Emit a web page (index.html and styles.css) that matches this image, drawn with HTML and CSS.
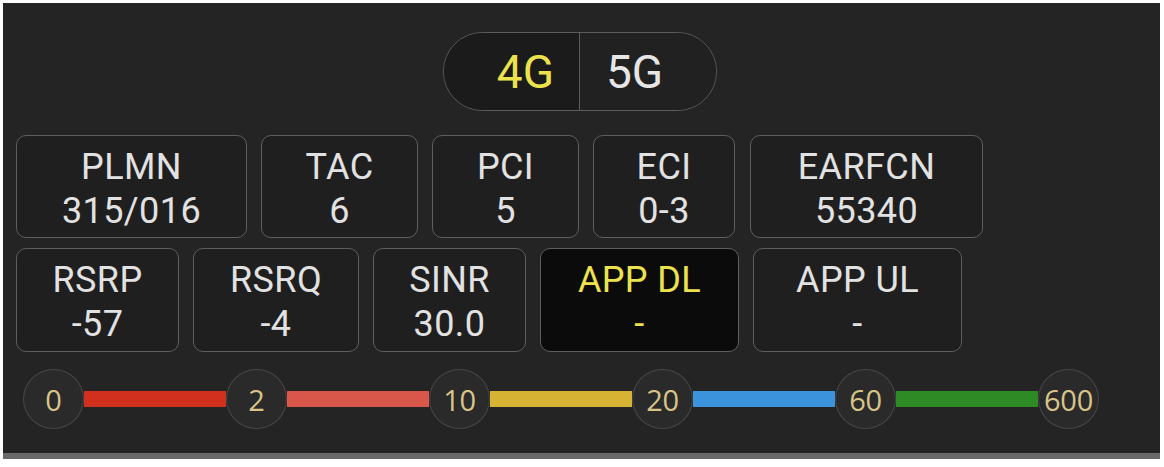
FILE: index.html
```html
<!DOCTYPE html>
<html>
<head>
<meta charset="utf-8">
<link rel="stylesheet" href="styles.css">
</head>
<body>
<div class="panel">
  <div class="toggle">
    <div class="seg seg-left active">4G</div>
    <div class="seg seg-right">5G</div>
  </div>
  <div class="row row-1">
    <div class="card w-plmn"><span>PLMN</span><span>315/016</span></div>
    <div class="card w-tac"><span>TAC</span><span>6</span></div>
    <div class="card w-pci"><span>PCI</span><span>5</span></div>
    <div class="card w-eci"><span>ECI</span><span>0-3</span></div>
    <div class="card w-earfcn"><span>EARFCN</span><span>55340</span></div>
  </div>
  <div class="row row-2">
    <div class="card tall w-rsrp"><span>RSRP</span><span>-57</span></div>
    <div class="card tall w-rsrq"><span>RSRQ</span><span>-4</span></div>
    <div class="card tall w-sinr"><span>SINR</span><span>30.0</span></div>
    <div class="card tall w-appdl selected"><span>APP DL</span><span>-</span></div>
    <div class="card tall w-appul"><span>APP UL</span><span>-</span></div>
  </div>
  <div class="scale">
    <div class="dot">0</div>
    <div class="bar bar-red"></div>
    <div class="dot">2</div>
    <div class="bar bar-coral"></div>
    <div class="dot">10</div>
    <div class="bar bar-yellow"></div>
    <div class="dot">20</div>
    <div class="bar bar-blue"></div>
    <div class="dot">60</div>
    <div class="bar bar-green"></div>
    <div class="dot">600</div>
  </div>
</div>
<div class="strip"></div>
</body>
</html>
```
FILE: styles.css
```css
html, body {
  margin: 0;
  padding: 0;
  background: #ffffff;
}

.panel {
  margin: 3px 4px 0 3px;
  height: 450px;
  box-sizing: border-box;
  background: #242424;
  padding: 29px 0 0 13px;
  font-family: Roboto, "Noto Sans", sans-serif;
  color: #e2e2e2;
}

.strip {
  margin: 0 4px 0 3px;
  height: 6px;
  background: #6a6a6a;
}

.toggle {
  width: 274px;
  height: 79px;
  box-sizing: border-box;
  margin: 0 0 0 427px;
  display: flex;
  border: 1.5px solid #5c5c5c;
  border-radius: 40px;
  overflow: hidden;
}

.seg {
  flex: 1;
  display: flex;
  align-items: center;
  font-size: 46px;
  line-height: 1;
  color: #e6e6e6;
}

.seg-left {
  justify-content: flex-end;
  padding-right: 25px;
  background: #1b1b1b;
  border-right: 1.5px solid #5c5c5c;
}

.seg-right {
  justify-content: flex-start;
  padding-left: 26px;
  background: #212121;
}

.seg.active {
  color: #ebe24e;
}

.row {
  display: flex;
  gap: 14px;
}

.row-1 {
  margin-top: 24px;
}

.row-2 {
  margin-top: 10px;
}

.card {
  height: 103px;
  box-sizing: border-box;
  border: 1.5px solid #5e5e5e;
  border-radius: 10px;
  background: #1f1f1f;
  padding-top: 9px;
  display: flex;
  flex-direction: column;
  align-items: center;
  font-size: 36px;
  line-height: 44px;
  letter-spacing: 0.4px;
  white-space: nowrap;
}

.card.tall {
  height: 104px;
}

.card.selected {
  background: #0b0b0b;
  color: #ebe24e;
}

.w-plmn { width: 231px; }
.w-tac { width: 157px; }
.w-pci { width: 147px; }
.w-eci { width: 142px; }
.w-earfcn { width: 233px; margin-left: 1px; }

.w-rsrp { width: 163px; }
.w-rsrq { width: 166px; }
.w-sinr { width: 153px; }
.w-appdl { width: 199px; }
.w-appul { width: 209px; }

.scale {
  display: flex;
  align-items: center;
  margin: 17px 0 0 7px;
}

.dot {
  width: 61px;
  height: 60px;
  box-sizing: border-box;
  flex: none;
  border-radius: 50%;
  border: 1.5px solid #474747;
  background: #2a2a2a;
  display: flex;
  align-items: center;
  justify-content: center;
  font-family: "Open Sans", "Noto Sans", sans-serif;
  font-size: 29px;
  color: #d8c488;
  letter-spacing: -0.3px;
}

.bar {
  width: 142px;
  height: 16px;
  flex: none;
}

.bar-red { background: #d2301f; }
.bar-coral { background: #d9574a; }
.bar-yellow { background: #d6b332; }
.bar-blue { background: #3b93dc; }
.bar-green { background: #2e8a25; }
```
